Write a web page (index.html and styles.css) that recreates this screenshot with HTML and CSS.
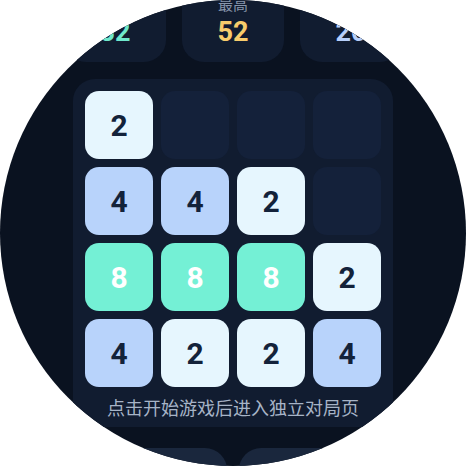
FILE: index.html
```html
<!DOCTYPE html>
<html lang="zh">
<head>
<meta charset="utf-8">
<link rel="stylesheet" href="styles.css">
</head>
<body>
<div class="watch">
  <div class="screen">
    <div class="stats">
      <div class="stat">
        <div class="stat-label">得分</div>
        <div class="stat-value teal">32</div>
      </div>
      <div class="stat">
        <div class="stat-label">最高</div>
        <div class="stat-value gold">52</div>
      </div>
      <div class="stat">
        <div class="stat-label">步数</div>
        <div class="stat-value blue">20</div>
      </div>
    </div>

    <div class="board">
      <div class="grid">
        <div class="tile t2">2</div>
        <div class="tile empty"></div>
        <div class="tile empty"></div>
        <div class="tile empty"></div>

        <div class="tile t4">4</div>
        <div class="tile t4">4</div>
        <div class="tile t2">2</div>
        <div class="tile empty"></div>

        <div class="tile t8">8</div>
        <div class="tile t8">8</div>
        <div class="tile t8">8</div>
        <div class="tile t2">2</div>

        <div class="tile t4">4</div>
        <div class="tile t2">2</div>
        <div class="tile t2">2</div>
        <div class="tile t4">4</div>
      </div>
      <div class="hint">点击开始游戏后进入独立对局页</div>
    </div>

    <div class="actions">
      <div class="btn"></div>
      <div class="btn"></div>
    </div>
  </div>
</div>
</body>
</html>
```

FILE: styles.css
```css
html, body {
  margin: 0;
  padding: 0;
  background: #ffffff;
}

.watch {
  width: 466px;
  height: 466px;
  border-radius: 50%;
  overflow: hidden;
  background: #0a1220;
  font-family: "Noto Sans CJK SC", "Noto Sans", sans-serif;
}

.screen {
  display: flex;
  flex-direction: column;
  align-items: center;
  margin-top: -18px;
}

.stats {
  display: flex;
  gap: 16px;
}

.stat {
  width: 102px;
  height: 80px;
  box-sizing: border-box;
  padding-top: 13px;
  background: #111c30;
  border-radius: 22px;
  display: flex;
  flex-direction: column;
  align-items: center;
  gap: 3px;
}

.stat-label {
  font-size: 15px;
  line-height: 18px;
  color: #8795ab;
}

.stat-value {
  font-family: Roboto, "Noto Sans", sans-serif;
  font-weight: 700;
  font-size: 27px;
  line-height: 32px;
}

.teal { color: #6fe8cc; }
.gold { color: #f8cc6c; }
.blue { color: #b7cffa; }

.board {
  margin-top: 17px;
  width: 320px;
  box-sizing: border-box;
  padding: 12px 12px 8px;
  background: #111c30;
  border-radius: 22px;
  display: flex;
  flex-direction: column;
  align-items: center;
}

.grid {
  display: grid;
  grid-template-columns: repeat(4, 68px);
  grid-auto-rows: 68px;
  gap: 8px;
}

.tile {
  border-radius: 14px;
  display: flex;
  align-items: center;
  justify-content: center;
  font-family: Roboto, "Noto Sans", sans-serif;
  font-weight: 700;
  font-size: 30px;
  color: #13223a;
}

.empty { background: #14213a; }
.t2 { background: #e6f6fe; }
.t4 { background: #b8d3fb; }
.t8 { background: #74f0d5; color: #ffffff; }

.hint {
  margin-top: 8px;
  font-size: 18px;
  line-height: 24px;
  color: #a7b4c7;
  white-space: nowrap;
}

.actions {
  margin-top: 21px;
  display: flex;
  gap: 12px;
}

.btn {
  width: 154px;
  height: 60px;
  background: #1a273d;
  border-radius: 22px;
}
```
